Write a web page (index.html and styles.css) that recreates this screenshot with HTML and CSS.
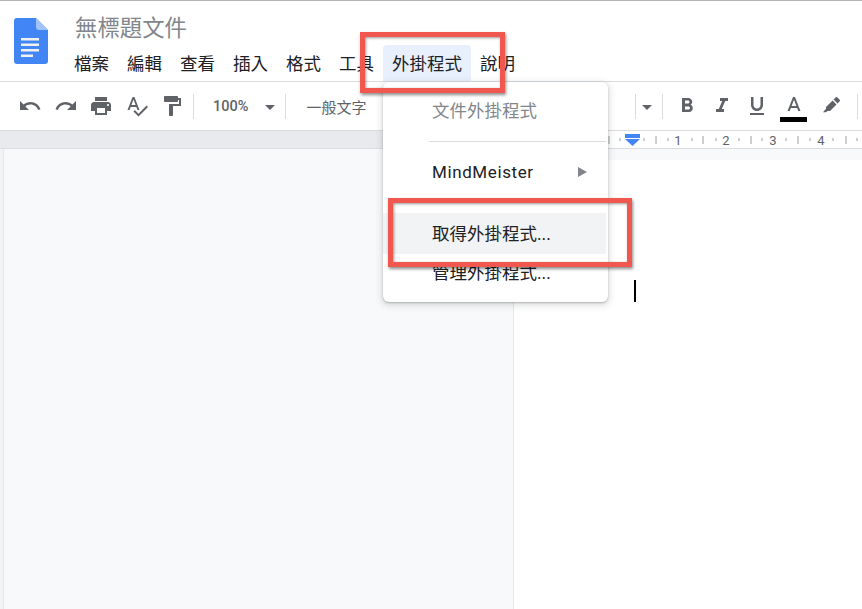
FILE: index.html
```html
<!DOCTYPE html>
<html lang="zh-Hant">
<head>
  <meta charset="UTF-8">
  <title>無標題文件</title>
  <link rel="stylesheet" href="styles.css">
</head>
<body>
  <div class="app">
    <header class="header">
      <svg class="logo" width="34" height="46" viewBox="0 0 34 46">
        <path d="M3 0H22L34 12V43a3 3 0 0 1-3 3H3a3 3 0 0 1-3-3V3a3 3 0 0 1 3-3z" fill="#4285f4"/>
        <path d="M22 0L34 12H25a3 3 0 0 1-3-3z" fill="#a1c2fa"/>
        <path d="M7 20H25V22.500H7zM7 25.500H25V28H7zM7 31H25V33.500H7zM7 36.500H19V39H7z" fill="#f1f1f1"/>
      </svg>
      <div class="titles">
        <div class="doc-title">無標題文件</div>
        <nav class="menubar">
          <span class="menu-item">檔案</span>
          <span class="menu-item">編輯</span>
          <span class="menu-item">查看</span>
          <span class="menu-item">插入</span>
          <span class="menu-item">格式</span>
          <span class="menu-item">工具</span>
          <span class="menu-item active">外掛程式</span>
          <span class="menu-item">說明</span>
        </nav>
      </div>
    </header>

    <div class="toolbar">
      <svg class="tool" viewBox="0 0 24 24"><path d="M12.500 8c-2.650 0-5.050.99-6.900 2.600L2 7v9h9l-3.620-3.620c1.390-1.160 3.160-1.880 5.120-1.880 3.540 0 6.550 2.310 7.600 5.500l2.370-.78C21.080 11.030 17.150 8 12.500 8z"/></svg>
      <svg class="tool" viewBox="0 0 24 24"><path d="M18.400 10.600C16.550 8.990 14.150 8 11.500 8c-4.650 0-8.580 3.030-9.960 7.220L3.900 16c1.050-3.190 4.050-5.500 7.600-5.500 1.950 0 3.730.72 5.120 1.880L13 16h9V7l-3.600 3.600z"/></svg>
      <svg class="tool" viewBox="0 0 24 24"><path d="M19 8H5c-1.660 0-3 1.340-3 3v6h4v4h12v-4h4v-6c0-1.660-1.340-3-3-3zm-3 11H8v-5h8v5zm3-7c-.55 0-1-.45-1-1s.45-1 1-1 1 .45 1 1-.45 1-1 1zm-1-9H6v4h12V3z"/></svg>
      <svg class="tool" viewBox="0 0 24 24"><path d="M12.450 16h2.090L9.430 3H7.570L2.460 16h2.090l1.120-3h5.640l1.140 3zm-6.020-5L8.500 5.480 10.570 11H6.430zm15.160.59l-8.090 8.090L9.830 16l-1.410 1.410 5.090 5.090L23 13l-1.410-1.410z"/></svg>
      <svg class="tool" viewBox="0 0 24 24"><path d="M18 4V3c0-.55-.45-1-1-1H5c-.55 0-1 .45-1 1v4c0 .55.45 1 1 1h12c.55 0 1-.45 1-1V6h1v4H9v11c0 .55.45 1 1 1h2c.55 0 1-.45 1-1v-9h8V4h-3z"/></svg>
      <span class="sep first"></span>
      <span class="zoom-value">100%</span>
      <span class="caret zoom-caret"></span>
      <span class="sep"></span>
      <span class="style-value">一般文字</span>

      <div class="tools-right">
        <span class="sep"></span>
        <span class="caret"></span>
        <span class="sep"></span>
        <svg class="tool" viewBox="0 0 24 24"><path d="M15.600 10.790c.97-.67 1.650-1.770 1.650-2.790 0-2.260-1.750-4-4-4H7v14h7.040c2.090 0 3.710-1.700 3.710-3.790 0-1.520-.86-2.820-2.150-3.420zM10 6.500h3c.83 0 1.500.67 1.500 1.500s-.67 1.500-1.500 1.500h-3v-3zm3.500 9H10v-3h3.500c.83 0 1.500.67 1.500 1.500s-.67 1.500-1.500 1.500z"/></svg>
        <svg class="tool" viewBox="0 0 24 24"><path d="M10 4v3h2.210l-3.420 8H6v3h8v-3h-2.210l3.420-8H18V4z"/></svg>
        <svg class="tool" viewBox="0 0 24 24"><path d="M12 17c3.310 0 6-2.690 6-6V3h-2.500v8c0 1.930-1.570 3.500-3.500 3.500S8.500 12.930 8.500 11V3H6v8c0 3.310 2.690 6 6 6zm-7 2v2h14v-2H5z"/></svg>
        <div class="text-color">
          <svg class="tool" viewBox="0 0 24 24"><path d="M11 2L5.500 16h2.250l1.120-3h6.250l1.120 3h2.250L13 2h-2zm-1.380 9L12 4.670 14.380 11H9.620z"/></svg>
          <span class="color-bar"></span>
        </div>
        <svg class="tool marker" viewBox="0 0 24 24"><path d="M16.800 3.300a1 1 0 0 1 1.400 0l2.500 2.500a1 1 0 0 1 0 1.400L18.500 9.400 14.600 5.500zM13.600 6.500l3.900 3.900-6.500 6.500H8.500L7 18.300H4L7 14.800V13z"/></svg>
        <span class="sep"></span>
      </div>
    </div>

    <div class="ruler">
      <div class="ruler-left"></div>
      <svg class="ruler-marks" width="348" height="17" viewBox="0 0 348 17">
        <g stroke="#9aa0a6" stroke-width="1">
          <path d="M95 5V13M106 7V10M130 7V10M142 5V13M154 7V10M178 7V10M189 5V13M202 7V10M225 7V10M237 5V13M248 7V10M272 7V10M284 5V13M296 7V10M319 7V10M332 5V13M343 7V10"/>
        </g>
        <g class="ruler-nums">
          <text x="164" y="14">1</text>
          <text x="212" y="14">2</text>
          <text x="259" y="14">3</text>
          <text x="307" y="14">4</text>
        </g>
        <path d="M111 3H126V7H111z" fill="#4285f4"/>
        <path d="M111 8H126L118.500 15z" fill="#4285f4"/>
      </svg>
    </div>

    <main class="workspace">
      <div class="canvas-left">
        <div class="page-left"></div>
      </div>
      <div class="canvas-right">
        <span class="text-cursor"></span>
      </div>
    </main>
  </div>

  <div class="dropdown">
    <div class="dd-item disabled">文件外掛程式</div>
    <div class="dd-sep"></div>
    <div class="dd-item latin">MindMeister<span class="dd-arrow"></span></div>
    <div class="dd-item hover">取得外掛程式...</div>
    <div class="dd-item last">管理外掛程式...</div>
  </div>

  <div class="callout callout-menu"></div>
  <div class="callout callout-item"></div>
</body>
</html>
```

FILE: styles.css
```css
html, body {
  margin: 0;
  padding: 0;
  height: 100%;
  overflow: hidden;
  background: #fff;
}
body {
  font-family: "Roboto", "Noto Sans CJK TC", sans-serif;
  color: #202124;
  position: relative;
}
.app {
  display: flex;
  flex-direction: column;
  height: 609px;
  border-top: 1px solid #b4b4b8;
  box-sizing: border-box;
}

/* header */
.header {
  display: flex;
  height: 80px;
  border-bottom: 1px solid #dadce0;
  flex: none;
}
.logo {
  margin: 17px 0 0 14px;
}
.titles {
  margin-left: 17px;
}
.doc-title {
  font-family: "Noto Sans CJK TC", sans-serif;
  font-size: 22.4px;
  line-height: 32px;
  height: 32px;
  margin: 9px 0 0 10px;
  color: #80868b;
}
.menubar {
  display: flex;
  margin-top: 3px;
}
.menu-item {
  font-family: "Noto Sans CJK TC", sans-serif;
  font-size: 17.500px;
  line-height: 36px;
  height: 36px;
  padding: 0 9px;
  color: #202124;
}
.menu-item.active {
  background: #e8f0fe;
  border-radius: 4px 4px 0 0;
}

/* toolbar */
.toolbar {
  display: flex;
  align-items: center;
  height: 49px;
  padding-left: 18px;
  border-bottom: 1px solid #dadce0;
  box-sizing: border-box;
  flex: none;
  color: #5f6368;
}
.tool {
  width: 24px;
  height: 24px;
  margin-right: 11.500px;
  fill: #5f6368;
  flex: none;
}
.sep {
  width: 1px;
  height: 25px;
  background: #dadce0;
  flex: none;
}
.sep.first {
  margin-left: -2.500px;
}
.zoom-value {
  font-size: 14.500px;
  margin-left: 19px;
  color: #5f6368;
  font-weight: 500;
  flex: none;
}
.caret {
  width: 0;
  height: 0;
  border-left: 5px solid transparent;
  border-right: 5px solid transparent;
  border-top: 5px solid #5f6368;
  margin: 2px 10px 0 6px;
  flex: none;
}
.zoom-caret {
  margin-left: 17px;
}
.style-value {
  font-family: "Noto Sans CJK TC", sans-serif;
  font-size: 15px;
  margin-left: 20px;
  color: #5f6368;
  white-space: nowrap;
  flex: none;
}
.tools-right {
  display: flex;
  align-items: center;
  margin-left: 269px;
  flex: none;
}
.tools-right .sep:nth-child(3) {
  margin-right: 12px;
}
.tools-right .tool {
  margin-right: 11px;
}
.tools-right .marker {
  margin-right: 14px;
}
.text-color {
  position: relative;
  width: 27px;
  height: 32px;
  margin: 0 12px 0 0;
  display: flex;
  justify-content: center;
}
.tools-right .text-color .tool {
  margin: 5px 0 0;
}
.color-bar {
  position: absolute;
  left: 0;
  bottom: 0;
  width: 27px;
  height: 5px;
  background: #000;
}

/* ruler */
.ruler {
  display: flex;
  height: 18px;
  border-bottom: 1px solid #dadce0;
  box-sizing: border-box;
  flex: none;
}
.ruler-left {
  width: 514px;
  background: #e8eaed;
}
.ruler-marks {
  flex: none;
}
.ruler-nums text {
  font-family: "Roboto", sans-serif;
  font-size: 13px;
  fill: #5f6368;
  text-anchor: middle;
}

/* document area */
.workspace {
  display: flex;
  flex: 1;
}
.canvas-left {
  width: 514px;
  background: #f1f3f4;
  padding-left: 3px;
  box-sizing: border-box;
  display: flex;
}
.page-left {
  flex: 1;
  background: #f8f9fa;
  border-left: 1px solid #e4e6e9;
  border-right: 1px solid #e4e6e9;
}
.canvas-right {
  flex: 1;
  background: #fff;
  position: relative;
  border-top: 11px solid #f8f9fa;
}
.text-cursor {
  position: absolute;
  left: 120px;
  top: 120px;
  width: 2px;
  height: 22px;
  background: #000;
}

/* menu that hangs under 外掛程式 */
.dropdown {
  position: absolute;
  left: 383px;
  top: 82px;
  width: 225px;
  height: 220px;
  background: #fff;
  border-radius: 6px;
  box-shadow: 0 2px 6px 2px rgba(60, 64, 67, .15), 0 1px 2px rgba(60, 64, 67, .3);
  font-family: "Roboto", "Noto Sans CJK TC", sans-serif;
  font-size: 17.500px;
  padding-top: 9px;
  box-sizing: border-box;
}
.dd-item {
  height: 40px;
  line-height: 40px;
  padding-left: 49px;
  position: relative;
  color: #202124;
}
.dd-item.disabled {
  color: #80868b;
}
.dd-item.latin {
  font-size: 17px;
  letter-spacing: .6px;
  margin-bottom: 21px;
}
.dd-item.hover {
  background: #f1f3f4;
  height: 41px;
  line-height: 42px;
  margin-right: 2px;
}
.dd-item.last {
  line-height: 38px;
}
.dd-sep {
  height: 1px;
  background: #dadce0;
  margin: 10px 2px 10px 46px;
}
.dd-arrow {
  position: absolute;
  right: 21px;
  top: 15px;
  border-left: 9px solid #80868b;
  border-top: 5px solid transparent;
  border-bottom: 5px solid transparent;
}

/* red annotation boxes */
.callout {
  position: absolute;
  border: 5px solid #f0584f;
  box-sizing: border-box;
  box-shadow: 1px 2px 3px rgba(0, 0, 0, .45), inset 1px 1px 3px rgba(0, 0, 0, .4);
}
.callout-menu {
  left: 360px;
  top: 32px;
  width: 145px;
  height: 61px;
}
.callout-item {
  left: 388px;
  top: 198px;
  width: 244px;
  height: 69px;
}
```
